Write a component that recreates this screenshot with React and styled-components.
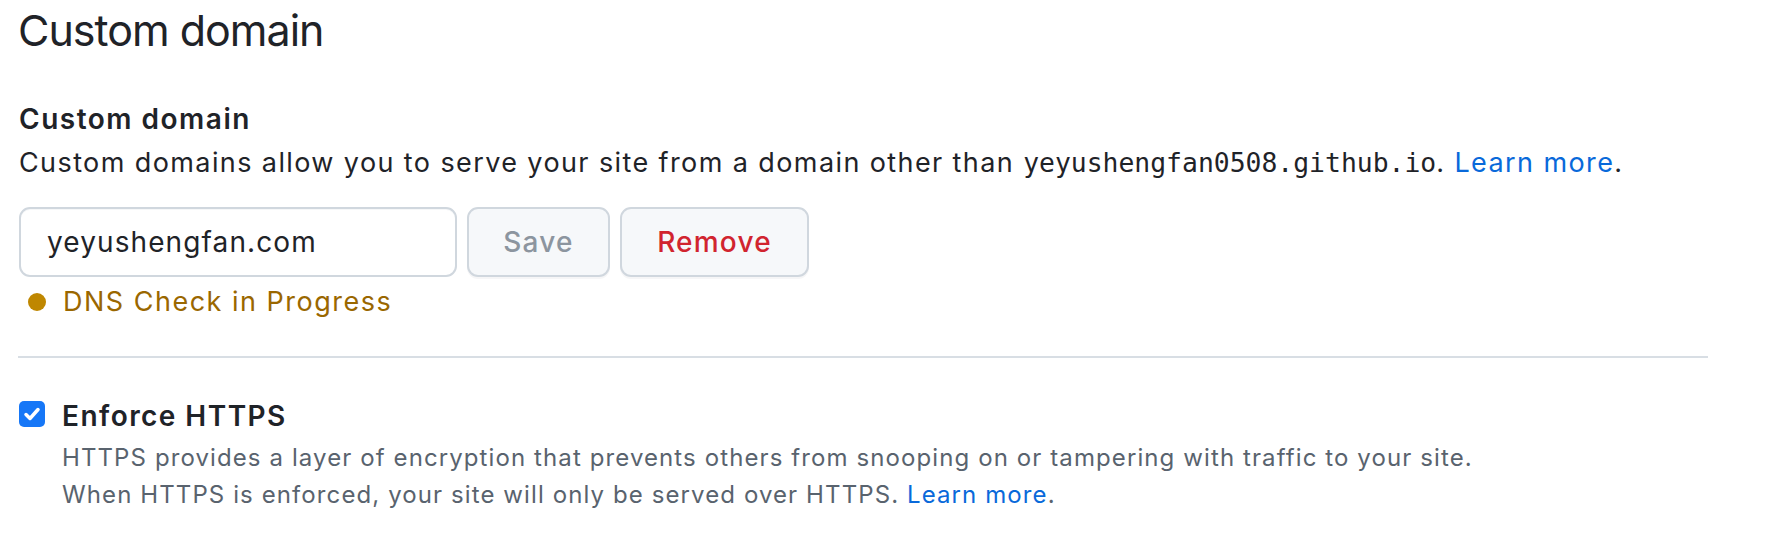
import React from "react";
import styled, { createGlobalStyle } from "styled-components";

const Global = createGlobalStyle`
  html, body { margin: 0; padding: 0; background: #ffffff; }
  body { font-family: Inter, "Noto Sans", "Liberation Sans", sans-serif; color: #1f2328; }
`;

const Page = styled.div`
  width: 1690px;
  padding: 0 0 0 18px;
`;

const Title = styled.h2`
  margin: 3px 0 0;
  font-size: 43px;
  font-weight: 400;
  line-height: 54px;
  letter-spacing: -1px;
`;

const Section = styled.section`
  margin-top: 44px;
  padding-left: 1px;
`;

const Label = styled.div`
  font-size: 28px;
  font-weight: 600;
  line-height: 36px;
  letter-spacing: 1.5px;
`;

const Note = styled.p`
  margin: 8px 0 0;
  font-size: 27px;
  line-height: 36px;
  letter-spacing: 1.4px;
`;

const Mono = styled.code`
  font-family: "DejaVu Sans Mono", "Liberation Mono", monospace;
  font-size: 26.4px;
  line-height: 1;
  letter-spacing: 0;
`;

const Link = styled.a`
  color: #0969da;
  text-decoration: none;
`;

const FormRow = styled.div`
  display: flex;
  gap: 10px;
  margin-top: 26px;
`;

const Input = styled.input`
  box-sizing: border-box;
  width: 438px;
  height: 70px;
  padding: 0 26px;
  border: 2px solid #d0d7de;
  border-radius: 11px;
  font-family: inherit;
  font-size: 28px;
  letter-spacing: 1.1px;
  color: #1f2328;
  background: #ffffff;
  outline: none;
  box-shadow: inset 0 1px 0 rgba(208, 215, 222, 0.2);
`;

const Button = styled.button`
  box-sizing: border-box;
  height: 70px;
  width: ${(p) => p.$w}px;
  padding: 0;
  border: 2px solid #d0d7de;
  border-radius: 11px;
  background: #f6f8fa;
  font-family: inherit;
  font-size: 28px;
  font-weight: 500;
  letter-spacing: 1.2px;
  color: ${(p) => p.$color};
  box-shadow: 0 2px 0 rgba(31, 35, 40, 0.04);
  cursor: ${(p) => (p.disabled ? "default" : "pointer")};
`;

const Status = styled.div`
  display: flex;
  align-items: center;
  gap: 17px;
  margin-top: 7px;
  padding-left: 9px;
  font-size: 27px;
  line-height: 36px;
  letter-spacing: 1.5px;
  color: #9a6700;
`;

const Dot = styled.span`
  flex: none;
  width: 18px;
  height: 18px;
  border-radius: 50%;
  background: #bf8700;
`;

const Divider = styled.hr`
  margin: 36px 0 0;
  border: 0;
  border-top: 2px solid #d8dee4;
`;

const CheckRow = styled.div`
  display: flex;
  gap: 17px;
  margin-top: 40px;
  padding-left: 1px;
`;

const Box = styled.span`
  flex: none;
  width: 26px;
  height: 26px;
  margin-top: 3px;
  border-radius: 5px;
  background: #1677f7;
  display: flex;
  align-items: center;
  justify-content: center;
`;

const CheckText = styled.div`
  display: flex;
  flex-direction: column;
`;

const CheckLabel = styled.div`
  font-size: 28px;
  font-weight: 600;
  line-height: 36px;
  letter-spacing: 1.45px;
`;

const Desc = styled.p`
  margin: 5px 0 0;
  font-size: 24px;
  line-height: 37px;
  letter-spacing: 1.1px;
  color: #59636e;
`;

export default function App() {
  return (
    <>
      <Global />
      <Page>
        <Title>Custom domain</Title>
        <Section>
          <Label>Custom domain</Label>
          <Note>
            Custom domains allow you to serve your site from a domain other than{" "}
            <Mono>yeyushengfan0508.github.io</Mono>. <Link href="#">Learn more</Link>.
          </Note>
          <FormRow>
            <Input defaultValue="yeyushengfan.com" />
            <Button $w={143} $color="#8c959f" disabled>
              Save
            </Button>
            <Button $w={189} $color="#d1242f">
              Remove
            </Button>
          </FormRow>
          <Status>
            <Dot />
            DNS Check in Progress
          </Status>
        </Section>
        <Divider />
        <CheckRow>
          <Box>
            <svg width="20" height="20" viewBox="0 0 16 16">
              <path d="M3.2 8.4 L6.4 11.6 L12.8 4.4" fill="none" stroke="#fff" strokeWidth="2.8" strokeLinecap="round" strokeLinejoin="round" />
            </svg>
          </Box>
          <CheckText>
            <CheckLabel>Enforce HTTPS</CheckLabel>
            <Desc>
              HTTPS provides a layer of encryption that prevents others from snooping on or tampering with traffic to your site.
              <br />
              When HTTPS is enforced, your site will only be served over HTTPS. <Link href="#">Learn more</Link>.
            </Desc>
          </CheckText>
        </CheckRow>
      </Page>
    </>
  );
}
